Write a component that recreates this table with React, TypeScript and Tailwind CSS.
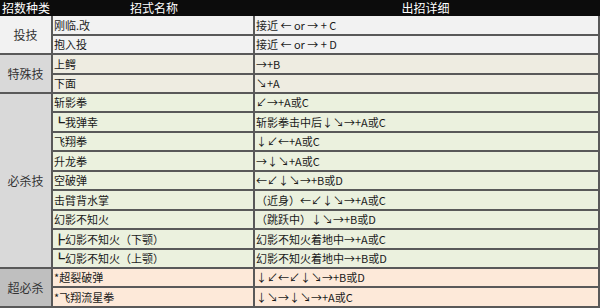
import React from 'react';

interface MoveRow {
  name: string;
  detail: string;
  h: number;
}

interface Group {
  label: string;
  labelBg: string;
  rowBg: string;
  rows: MoveRow[];
}

const groups: Group[] = [
  {
    label: '投技',
    labelBg: 'bg-[#f2f2f2]',
    rowBg: 'bg-[#f2f2f2]',
    rows: [
      { name: '刚临.改', detail: '接近 ← or → + C', h: 20 },
      { name: '抱入投', detail: '接近 ← or → + D', h: 19 },
    ],
  },
  {
    label: '特殊技',
    labelBg: 'bg-[#d9d9d9]',
    rowBg: 'bg-[#eeece1]',
    rows: [
      { name: '上鳄', detail: '→+B', h: 20 },
      { name: '下面', detail: '↘+A', h: 19 },
    ],
  },
  {
    label: '必杀技',
    labelBg: 'bg-[#d9d9d9]',
    rowBg: 'bg-[#ebf1de]',
    rows: [
      { name: '斩影拳', detail: '↙→+A或C', h: 19 },
      { name: '┗我弹幸', detail: '斩影拳击中后↓↘→+A或C', h: 20 },
      { name: '飞翔拳', detail: '↓↙←+A或C', h: 19 },
      { name: '升龙拳', detail: '→↓↘+A或C', h: 20 },
      { name: '空破弹', detail: '←↙↓↘→+B或D', h: 19 },
      { name: '击臂背水掌', detail: '（近身）←↙↓↘→+A或C', h: 20 },
      { name: '幻影不知火', detail: '（跳跃中）↓↘→+B或D', h: 19 },
      { name: '┣幻影不知火（下颚）', detail: '幻影不知火着地中→+A或C', h: 20 },
      { name: '┗幻影不知火（上颚）', detail: '幻影不知火着地中→+B或D', h: 19 },
    ],
  },
  {
    label: '超必杀',
    labelBg: 'bg-[#bfbfbf]',
    rowBg: 'bg-[#fde9d9]',
    rows: [
      { name: '*超裂破弹', detail: '↓↙←↙↓↘→+B或D', h: 19 },
      { name: '*飞翔流星拳', detail: '↓↘→↓↘→+A或C', h: 20 },
    ],
  },
];

const App: React.FC = () => {
  return (
    <div
      className="w-[600px] h-[308px] overflow-hidden bg-white text-[11px] leading-none text-[#1a1a1a]"
      style={{ fontFamily: '"Noto Sans CJK SC", "Noto Sans", sans-serif' }}
    >
      {/* Header */}
      <div className="flex h-[16px] bg-[#0c0c0c] text-white text-[12px]">
        <div className="w-[53px] flex items-center pl-[2px]">招数种类</div>
        <div className="w-[202px] flex items-center justify-center">招式名称</div>
        <div className="flex-1 flex items-center justify-center pr-[4px]">出招详细</div>
      </div>

      {groups.map(g => (
        <div key={g.label} className="flex">
          <div
            className={`w-[53px] shrink-0 flex items-center justify-center border-r-2 border-b-2 border-[#595959] text-[12px] text-[#333] ${g.labelBg}`}
          >
            {g.label}
          </div>
          <div className="flex-1 flex flex-col">
            {g.rows.map(r => (
              <div
                key={r.name}
                className={`flex border-b-2 border-[#595959] ${g.rowBg}`}
                style={{ height: r.h }}
              >
                <div className="w-[202px] shrink-0 flex items-center pl-[1px] border-r-2 border-[#595959] whitespace-nowrap">
                  {r.name}
                </div>
                <div className="flex-1 flex items-center pl-[1px] border-r-2 border-[#595959] whitespace-nowrap">
                  {r.detail}
                </div>
              </div>
            ))}
          </div>
        </div>
      ))}
    </div>
  );
};

export default App;
